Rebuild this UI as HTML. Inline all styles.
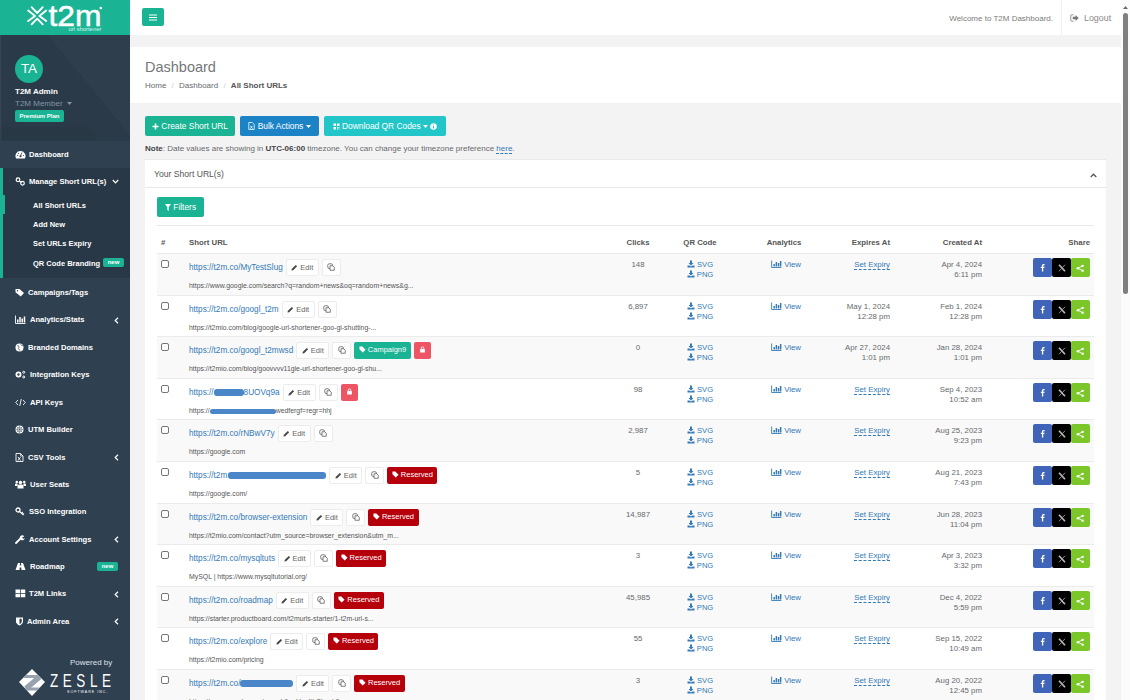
<!DOCTYPE html>
<html lang="en"><head><meta charset="utf-8"><title>T2M Dashboard - All Short URLs</title>
<style>
*{box-sizing:border-box}
html,body{margin:0;padding:0}
body{width:1130px;height:700px;overflow:hidden;position:relative;background:#f3f3f4;font-family:"Liberation Sans",sans-serif;color:#676a6c;font-size:8.3px;line-height:1.2}
.abs{position:absolute}
svg{display:inline-block;vertical-align:middle}
/* sidebar */
#side{position:absolute;left:0;top:0;width:130px;height:700px;background:#2f4050;overflow:hidden}
#logo{position:absolute;left:0;top:0;width:130px;height:35px;background:#1ab394}
#prof{position:absolute;left:0;top:35px;width:130px;height:106px;background:#2a3a48}
#av{position:absolute;left:15px;top:20px;width:28px;height:28px;border-radius:50%;background:#1ab394;color:#fff;font-size:13.5px;line-height:28px;text-align:center}
.mi{position:absolute;left:0;width:130px;height:27px;color:#fff;font-weight:bold;font-size:7.6px;line-height:27px;white-space:nowrap}
.mi .t{position:absolute;left:29px;top:0}
.mi svg{position:absolute;left:15px;top:9px}
.mi .ar{position:absolute;left:114px;top:10.500px}
.sub{position:absolute;left:33px;color:#fff;font-weight:bold;font-size:7.5px;line-height:10px;white-space:nowrap}
.new{position:absolute;background:#1ab394;color:#fff;font-size:6px;font-weight:bold;line-height:9px;height:9px;border-radius:2px;text-align:center;width:21px}
/* main */
#top{position:absolute;left:130px;top:0;width:991px;height:35px;background:#fff}
#hd{position:absolute;left:130px;top:47px;width:991px;height:56px;background:#fff}
.btn{position:absolute;height:20px;line-height:20px;border-radius:2px;color:#fff;font-size:8.400px;text-align:center;white-space:nowrap}
#ibox{position:absolute;left:145px;top:159px;width:961px;height:560px;background:#fff;border-top:1px solid #e7eaec}
.row{position:absolute;left:157px;width:937px;height:42px;border-top:1px solid #ebebeb;background:#fff}
.row.odd{background:#f9f9f9}
.cb{position:absolute;left:4px;top:6px;width:8px;height:8px;border:1px solid #767676;border-radius:2px;background:#fff}
.su{position:absolute;left:32px;top:3.700px;height:18px;white-space:nowrap;line-height:18px}
.lnk{color:#337ab7}
.sl{font-size:8.200px;vertical-align:middle;position:relative;top:.5px}
.lu{position:absolute;left:32px;top:26.500px;font-size:6.900px;color:#555;white-space:nowrap;line-height:9px}
.bt{display:inline-block;vertical-align:middle;height:17px;line-height:16px;border-radius:2px;font-size:7.500px;margin-left:3px;padding:0 4.500px;color:#fff}
.bt svg{vertical-align:-1px}
.bt.wh{background:#fff;border:1px solid #ececec;color:#666;line-height:15px}
.bt.cp{padding:0 4.500px}
.bt.camp{background:#1ab394}
.bt.lock{background:#ed5565;padding:0 5px}
.bt.res{background:#b5000c}
.rd{display:inline-block;height:7px;border-radius:3px;background:#4a86c8;vertical-align:-1px}
.rds{height:5px}
.c{position:absolute;top:5.800px;font-size:7.850px;line-height:10.600px;white-space:nowrap}
.clk{left:451px;width:60px;text-align:center}
.qr{left:513px;width:60px;text-align:center;font-size:7.600px}
.an{left:599px;width:60px;text-align:center}
.exp{right:204px;text-align:right}
.cr{right:112px;text-align:right}
.dash{border-bottom:1px dashed #337ab7}
.sh{position:absolute;right:4px;top:4px;height:19px;width:57px}
.s{position:absolute;top:0;width:19px;height:19px;text-align:center;line-height:18px;border-radius:2px}
.fb{left:0;background:#4065b8}
.tw{left:19px;background:#000}
.shr{left:38px;background:#7bc72a}
.th{position:absolute;top:237px;font-weight:bold;font-size:7.800px;color:#555;line-height:12px;white-space:nowrap}
.ic{vertical-align:-1px}
</style></head>
<body>
<div id="side">
<div id="logo">
<svg class="abs" style="left:0;top:0" width="130" height="35" viewBox="0 0 130 35">
<g stroke="#fff" stroke-width="1.900" fill="none" stroke-linecap="round" stroke-linejoin="round"><path d="M28.200 10.600L35 15.900 28.200 21.100M46.200 10.600L39.400 15.900 46.200 21.100M31.600 7.200L37.200 13 42.700 7.200M31.600 24.300L37.200 18.700 42.700 24.300"/></g>
<text x="48.500" y="26" font-family="Liberation Sans, sans-serif" font-size="29.500" fill="#fff" stroke="#fff" stroke-width=".5" textLength="53" lengthAdjust="spacingAndGlyphs">t2m</text>
<circle cx="100.800" cy="8" r="1.300" fill="#fff"/>
<text x="68.400" y="30.600" font-family="Liberation Sans, sans-serif" font-size="5" fill="#d8f3ec" textLength="33" lengthAdjust="spacingAndGlyphs">url shortener</text>
</svg>
</div>
<div id="prof"><svg class="abs" style="left:0;top:0" width="130" height="106" viewBox="0 0 130 106"><path d="M48 0h82v100z" fill="#fff" fill-opacity=".022"/><path d="M0 0h1.300v106H0z" fill="#fff" fill-opacity=".06"/><path d="M0 92h88l10 14H0z" fill="#000" fill-opacity=".03"/></svg>
<div id="av">TA</div>
<div class="abs" style="left:15px;top:51px;color:#fff;font-weight:bold;font-size:8px;line-height:11px">T2M Admin</div>
<div class="abs" style="left:15px;top:62.500px;color:#8095a8;font-size:8px;line-height:11px">T2M Member <svg width="5" height="3" viewBox="0 0 10 6" style="vertical-align:1px;margin-left:2px"><path d="M0 0h10L5 6z" fill="#8095a8"/></svg></div>
<div class="abs" style="left:15px;top:75px;width:49px;height:12px;background:#1ab394;border-radius:2px;color:#fff;font-weight:bold;font-size:6px;line-height:12px;text-align:center">Premium Plan</div>
</div>
<div class="abs" style="left:0;top:168px;width:130px;height:110px;background:#293846;border-left:3px solid #1ab394"></div>
<div class="abs" style="left:0;top:195px;width:5px;height:19px;background:#1ab394"></div>
<div class="mi" style="top:140.5px"><svg width="11" height="9" viewBox="0 0 22 18"><path d="M11 2a10 10 0 0 0-8.700 15h17.400A10 10 0 0 0 11 2z" fill="#fff"/><circle cx="11" cy="12.500" r="2.200" fill="#2f4050"/><path d="M11 12l3-7" stroke="#2f4050" stroke-width="1.600"/><circle cx="5" cy="11" r="1.200" fill="#2f4050"/><circle cx="7" cy="6.500" r="1.200" fill="#2f4050"/><circle cx="17" cy="11" r="1.200" fill="#2f4050"/></svg><span class="t" style="left:29px">Dashboard</span></div>
<div class="mi" style="top:167.5px"><svg width="11" height="9" viewBox="0 0 22 18"><circle cx="6" cy="5.500" r="3.600" fill="none" stroke="#fff" stroke-width="2.400"/><circle cx="15" cy="12.500" r="3.600" fill="none" stroke="#fff" stroke-width="2.400"/><path d="M8 7.500l5 3.500" stroke="#fff" stroke-width="2.400"/></svg><span class="t" style="left:29px">Manage Short URL(s)</span><svg class="ar" style="top:11.500px;left:112px" width="7" height="5" viewBox="0 0 7 5"><path d="M.8 1L3.500 3.800 6.200 1" fill="none" stroke="#fff" stroke-width="1.200"/></svg></div>
<div class="mi" style="top:278.5px"><svg width="11" height="9" viewBox="0 0 22 18"><path d="M1 2h8l9 8-6.500 7L1 8.500z" fill="#fff"/><circle cx="5" cy="5.500" r="1.500" fill="#2f4050"/></svg><span class="t" style="left:28px">Campaigns/Tags</span></div>
<div class="mi" style="top:306.0px"><svg width="11" height="9" viewBox="0 0 22 18"><path d="M1 1v16h20" fill="none" stroke="#fff" stroke-width="1.800"/><rect x="4" y="9" width="3" height="6" fill="#fff"/><rect x="8.500" y="4" width="3" height="11" fill="#fff"/><rect x="13" y="7" width="3" height="8" fill="#fff"/><rect x="17.500" y="3" width="3" height="12" fill="#fff"/></svg><span class="t" style="left:30px">Analytics/Stats</span><svg class="ar" width="5" height="7" viewBox="0 0 5 7"><path d="M4 .8L1.200 3.500 4 6.200" fill="none" stroke="#fff" stroke-width="1.200"/></svg></div>
<div class="mi" style="top:333.5px"><svg width="11" height="9" viewBox="0 0 22 18"><circle cx="9" cy="9" r="8" fill="#fff"/><path d="M4 6c2-1 4 0 4 2s-2 2-1 4 3 1 3 3" stroke="#2f4050" stroke-width="1.500" fill="none"/><path d="M11 3c1 2 4 1 5 3" stroke="#2f4050" stroke-width="1.500" fill="none"/></svg><span class="t" style="left:28px">Branded Domains</span></div>
<div class="mi" style="top:361.0px"><svg width="11" height="9" viewBox="0 0 22 18"><circle cx="7" cy="9" r="4.200" fill="none" stroke="#fff" stroke-width="3.600"/><circle cx="17.500" cy="4.500" r="2" fill="none" stroke="#fff" stroke-width="2"/><circle cx="17.500" cy="14" r="2" fill="none" stroke="#fff" stroke-width="2"/></svg><span class="t" style="left:30px">Integration Keys</span></div>
<div class="mi" style="top:388.5px"><svg width="11" height="9" viewBox="0 0 22 18"><path d="M6 4L1.500 9 6 14M16 4l4.500 5L16 14M12.500 2l-3 14" fill="none" stroke="#fff" stroke-width="1.800"/></svg><span class="t" style="left:30px">API Keys</span></div>
<div class="mi" style="top:416.0px"><svg width="11" height="9" viewBox="0 0 22 18"><circle cx="9" cy="9" r="8" fill="#fff"/><circle cx="9" cy="9" r="5" fill="none" stroke="#2f4050" stroke-width="1"/><path d="M9 1v16M1 9h16M3.500 3.500l11 11M14.500 3.500l-11 11" stroke="#2f4050" stroke-width=".8"/></svg><span class="t" style="left:28px">UTM Builder</span></div>
<div class="mi" style="top:443.5px"><svg width="11" height="9" viewBox="0 0 22 18"><path d="M2 1h9l5 5v11H2z" fill="none" stroke="#fff" stroke-width="1.800"/><path d="M11 1v5h5" fill="none" stroke="#fff" stroke-width="1.400"/><path d="M6 8l5 7M11 8l-5 7" stroke="#fff" stroke-width="1.800"/></svg><span class="t" style="left:28px">CSV Tools</span><svg class="ar" width="5" height="7" viewBox="0 0 5 7"><path d="M4 .8L1.200 3.500 4 6.200" fill="none" stroke="#fff" stroke-width="1.200"/></svg></div>
<div class="mi" style="top:471.0px"><svg width="11" height="9" viewBox="0 0 22 18"><circle cx="11" cy="5" r="3.500" fill="#fff"/><path d="M5 17v-5a3 3 0 0 1 3-3h6a3 3 0 0 1 3 3v5z" fill="#fff"/><circle cx="3.500" cy="4" r="2.500" fill="#fff"/><circle cx="18.500" cy="4" r="2.500" fill="#fff"/><path d="M0 12V9a2 2 0 0 1 2-2h3v5zM22 12V9a2 2 0 0 0-2-2h-3v5z" fill="#fff"/></svg><span class="t" style="left:30px">User Seats</span></div>
<div class="mi" style="top:498.0px"><svg width="11" height="9" viewBox="0 0 22 18"><circle cx="6" cy="6" r="4" fill="none" stroke="#fff" stroke-width="2.600"/><path d="M9 9l8 7M13 12.500l2.500-2.500M16 15l2-2" stroke="#fff" stroke-width="2.200" fill="none"/></svg><span class="t" style="left:29px">SSO Integration</span></div>
<div class="mi" style="top:525.5px"><svg width="11" height="9" viewBox="0 0 22 18"><path d="M2 16l9-9" stroke="#fff" stroke-width="3.600" stroke-linecap="round"/><path d="M18.500 2.500a5 5 0 1 0 1 4l-3.500 1-2-2z" fill="#fff"/></svg><span class="t" style="left:29px">Account Settings</span><svg class="ar" width="5" height="7" viewBox="0 0 5 7"><path d="M4 .8L1.200 3.500 4 6.200" fill="none" stroke="#fff" stroke-width="1.200"/></svg></div>
<div class="mi" style="top:552.5px"><svg width="11" height="9" viewBox="0 0 22 18"><path d="M6 2h4l-.5 5h3L12 2h4l5 14h-8l-.4-5h-3.200L9 16H1z" fill="#fff"/></svg><span class="t" style="left:30px">Roadmap</span><span class="new" style="left:97px;top:9px">new</span></div>
<div class="mi" style="top:580.0px"><svg width="11" height="9" viewBox="0 0 22 18"><rect x="1" y="1" width="9" height="7" fill="#fff"/><rect x="11.500" y="1" width="9" height="7" fill="#fff"/><rect x="1" y="9.500" width="9" height="7" fill="#fff"/><rect x="11.500" y="9.500" width="9" height="7" fill="#fff"/></svg><span class="t" style="left:29px">T2M Links</span><svg class="ar" width="5" height="7" viewBox="0 0 5 7"><path d="M4 .8L1.200 3.500 4 6.200" fill="none" stroke="#fff" stroke-width="1.200"/></svg></div>
<div class="mi" style="top:607.5px"><svg width="11" height="9" viewBox="0 0 22 18"><path d="M2 1h14v8c0 5-7 8-7 8s-7-3-7-8z" fill="#fff"/><path d="M9 3.500h4.500v5.500c0 3-4.500 5.500-4.500 5.500z" fill="#2f4050"/></svg><span class="t" style="left:27px">Admin Area</span><svg class="ar" width="5" height="7" viewBox="0 0 5 7"><path d="M4 .8L1.200 3.500 4 6.200" fill="none" stroke="#fff" stroke-width="1.200"/></svg></div>
<div class="sub" style="top:200.8px">All Short URLs</div>
<div class="sub" style="top:219.8px">Add New</div>
<div class="sub" style="top:238.8px">Set URLs Expiry</div>
<div class="sub" style="top:258.8px">QR Code Branding</div>
<span class="new" style="left:103px;top:258px">new</span>
<div class="abs" style="left:70px;top:657px;color:#dfe4ed;font-size:8px;line-height:11px">Powered by</div>
<svg class="abs" style="left:18px;top:668px" width="96" height="30" viewBox="0 0 96 30">
<clipPath id="dm"><path d="M14 1l13 13-13 14L1 14z"/></clipPath>
<path d="M14 1l13 13-13 14L1 14z" fill="#fff"/>
<g clip-path="url(#dm)" fill="none" stroke="#97a2ae"><path d="M5 8.500h17" stroke-width="3.200"/><path d="M21.500 9L8 20.500" stroke-width="5.500"/><path d="M7 21h17" stroke-width="3.200"/></g>
<text x="32" y="14.800" transform="scale(1,1.300)" font-family="Liberation Sans, sans-serif" font-size="13.500" fill="#fff" textLength="61" lengthAdjust="spacing">ZESLE</text>
<text x="49" y="25" font-family="Liberation Sans, sans-serif" font-size="3.600" fill="#fff" letter-spacing="1">SOFTWARE INC.</text>
</svg>
</div>
<div id="top">
<div class="abs" style="left:12px;top:8px;width:22px;height:18px;border-radius:2px;background:#1ab394"><svg class="abs" style="left:7px;top:5.500px" width="8" height="7" viewBox="0 0 8 7"><path d="M0 1h8M0 3.500h8M0 6h8" stroke="#fff" stroke-width="1.100"/></svg></div>
<div class="abs" style="right:68px;top:13px;font-size:8px;line-height:11px;color:#7c7c7c">Welcome to T2M Dashboard.</div>
<div class="abs" style="left:931px;top:0;width:1px;height:35px;background:#f0f0f0"></div>
<svg class="abs" style="left:940px;top:14px" width="9" height="8" viewBox="0 0 18 16"><path d="M7 1.500H3.500a2 2 0 0 0-2 2v9a2 2 0 0 0 2 2H7" fill="none" stroke="#888" stroke-width="1.800"/><path d="M5.500 5.500h5.500V2L17.500 8 11 14v-3.500H5.500z" fill="#777"/></svg>
<div class="abs" style="left:954px;top:12.500px;font-size:8.900px;line-height:11px;color:#888">Logout</div>
</div>
<div id="hd">
<div class="abs" style="left:15px;top:10px;font-size:14.500px;line-height:20px;color:#75787a">Dashboard</div>
<div class="abs" style="left:15px;top:33px;font-size:8px;line-height:11px;color:#676a6c;white-space:nowrap">Home <span style="color:#ccc;padding:0 3px">/</span> Dashboard <span style="color:#ccc;padding:0 3px">/</span> <b style="color:#555">All Short URLs</b></div>
</div>
<div class="btn" style="left:145px;top:116px;width:90px;background:#1ab394"><svg width="7" height="7" viewBox="0 0 14 14" style="vertical-align:-.5px"><path d="M7 1v12M1 7h12" stroke="#fff" stroke-width="3.200"/></svg> Create Short URL</div>
<div class="btn" style="left:240px;top:116px;width:79px;background:#1c84c6"><svg width="7" height="8" viewBox="0 0 14 16" style="vertical-align:-1px"><path d="M1.500 1h7l4 4v10h-11z" fill="none" stroke="#fff" stroke-width="1.500"/><path d="M4.500 7.500l4.500 6M9 7.500l-4.500 6" stroke="#fff" stroke-width="1.500"/></svg> Bulk Actions <svg width="5" height="3" viewBox="0 0 10 6" style="vertical-align:1px"><path d="M0 0h10L5 6z" fill="#fff"/></svg></div>
<div class="btn" style="left:324px;top:116px;width:122px;background:#23c6c8"><svg width="7" height="7" viewBox="0 0 14 14" style="vertical-align:-.5px"><path d="M1 1h5v5H1zM8 1h5v5H8zM1 8h5v5H1zM8 8h2v2H8zM11 8h2v2h-2zM8 11h2v2H8zM11 11h2v2h-2z" fill="#fff"/></svg> Download QR Codes <svg width="5" height="3" viewBox="0 0 10 6" style="vertical-align:1px"><path d="M0 0h10L5 6z" fill="#fff"/></svg> <svg width="7" height="7" viewBox="0 0 14 14" style="vertical-align:-.5px"><circle cx="7" cy="7" r="6.500" fill="#fff"/><path d="M7 6v5M7 3v1.600" stroke="#23c6c8" stroke-width="2"/></svg></div>
<div class="abs" style="left:145px;top:142.500px;font-size:8px;line-height:12px;white-space:nowrap"><b style="color:#444">Note</b>: Date values are showing in <b style="color:#444">UTC-06:00</b> timezone. You can change your timezone preference <span class="lnk dash">here</span>.</div>
<div id="ibox">
<div class="abs" style="left:9px;top:8px;font-size:8.600px;line-height:12px;color:#555">Your Short URL(s)</div>
<svg class="abs" style="left:945px;top:13px" width="7" height="5" viewBox="0 0 7 5"><path d="M.7 4L3.500 1.200 6.300 4" fill="none" stroke="#555" stroke-width="1.300"/></svg>
<div class="abs" style="left:0;top:27px;width:961px;height:1px;background:#e7eaec"></div>
</div>
<div class="btn" style="left:157px;top:197px;width:47px;background:#1ab394"><svg width="6" height="7" viewBox="0 0 12 14" style="vertical-align:-1px"><path d="M0 0h12L7.500 6v8l-3-2.500V6z" fill="#fff"/></svg> Filters</div>
<div class="abs" style="left:157px;top:225px;width:937px;height:1px;background:#e7eaec"></div>
<div class="th" style="left:161px">#</div>
<div class="th" style="left:189px">Short URL</div>
<div class="th" style="left:608px;width:60px;text-align:center">Clicks</div>
<div class="th" style="left:670px;width:60px;text-align:center">QR Code</div>
<div class="th" style="left:754px;width:60px;text-align:center">Analytics</div>
<div class="th" style="right:240px">Expires At</div>
<div class="th" style="right:148px">Created At</div>
<div class="th" style="right:40px">Share</div>
<div class="row odd" style="top:253px">
<i class="cb"></i>
<div class="su"><span class="lnk sl">https://t2m.co/MyTestSlug</span><span class="bt wh"><svg class="ic" viewBox="0 0 16 16" width="7" height="7"><path d="M1 15l1-4 9-9 3 3-9 9z" fill="#444"/></svg> Edit</span><span class="bt wh cp"><svg class="ic" viewBox="0 0 16 16" width="8" height="8"><rect x="1.500" y="1.500" width="9.500" height="9.500" rx="3" fill="none" stroke="#555" stroke-width="1.500"/><path d="M6 5.500h5.500l3 3v6H6z" fill="#fff" stroke="#555" stroke-width="1.500" stroke-linejoin="round"/></svg></span></div>
<div class="lu">https://www.google.com/search?q=random+news&amp;oq=random+news&amp;g...</div>
<div class="c clk">148</div>
<div class="c qr"><span class="lnk"><svg class="ic" viewBox="0 0 16 16" width="8" height="8"><path d="M6 1h4v5h3l-5 5-5-5h3z" fill="#337ab7"/><path d="M1 11h4l3 2 3-2h4v4H1z" fill="#337ab7"/></svg> SVG</span><br><span class="lnk"><svg class="ic" viewBox="0 0 16 16" width="8" height="8"><path d="M6 1h4v5h3l-5 5-5-5h3z" fill="#337ab7"/><path d="M1 11h4l3 2 3-2h4v4H1z" fill="#337ab7"/></svg> PNG</span></div>
<div class="c an"><span class="lnk"><svg class="ic" viewBox="0 0 18 16" width="11" height="8" preserveAspectRatio="none"><path d="M1 1v14h16" fill="none" stroke="#337ab7" stroke-width="1.6"/><rect x="4" y="8" width="2.4" height="5" fill="#337ab7"/><rect x="7.6" y="4" width="2.4" height="9" fill="#337ab7"/><rect x="11.2" y="6" width="2.4" height="7" fill="#337ab7"/><rect x="14.6" y="2" width="2.4" height="11" fill="#337ab7"/></svg> View</span></div>
<div class="c exp"><span class="lnk dash">Set Expiry</span></div>
<div class="c cr">Apr 4, 2024<br>6:11 pm</div>
<div class="sh"><span class="s fb"><svg viewBox="0 0 16 16" width="9" height="9"><path d="M9.3 15V8.9h2l.3-2.4H9.3V5c0-.7.2-1.100 1.200-1.100h1.200V1.700C11.500 1.700 10.800 1.600 10 1.600c-1.800 0-3 1.100-3 3.100v1.800H5v2.400h2V15z" fill="#fff"/></svg></span><span class="s tw"><svg viewBox="0 0 16 16" width="8" height="8"><path d="M2 1.500l12 13" stroke="#b8b8b8" stroke-width="3.400" fill="none"/><path d="M14 1.500L2 14.500" stroke="#a0a0a0" stroke-width="1.800" fill="none"/></svg></span><span class="s shr"><svg viewBox="0 0 16 16" width="8.500" height="8.500"><path d="M12.500 3.500L3.500 8l9 4.500" stroke="#fff" stroke-width="1.600" fill="none"/><circle cx="12.500" cy="3.500" r="2.300" fill="#fff"/><circle cx="3.500" cy="8" r="2.300" fill="#fff"/><circle cx="12.500" cy="12.500" r="2.300" fill="#fff"/></svg></span></div>
</div>
<div class="row" style="top:295px">
<i class="cb"></i>
<div class="su"><span class="lnk sl">https://t2m.co/googl_t2m</span><span class="bt wh"><svg class="ic" viewBox="0 0 16 16" width="7" height="7"><path d="M1 15l1-4 9-9 3 3-9 9z" fill="#444"/></svg> Edit</span><span class="bt wh cp"><svg class="ic" viewBox="0 0 16 16" width="8" height="8"><rect x="1.500" y="1.500" width="9.500" height="9.500" rx="3" fill="none" stroke="#555" stroke-width="1.500"/><path d="M6 5.500h5.500l3 3v6H6z" fill="#fff" stroke="#555" stroke-width="1.500" stroke-linejoin="round"/></svg></span></div>
<div class="lu">https://t2mio.com/blog/google-url-shortener-goo-gl-shutting-...</div>
<div class="c clk">6,897</div>
<div class="c qr"><span class="lnk"><svg class="ic" viewBox="0 0 16 16" width="8" height="8"><path d="M6 1h4v5h3l-5 5-5-5h3z" fill="#337ab7"/><path d="M1 11h4l3 2 3-2h4v4H1z" fill="#337ab7"/></svg> SVG</span><br><span class="lnk"><svg class="ic" viewBox="0 0 16 16" width="8" height="8"><path d="M6 1h4v5h3l-5 5-5-5h3z" fill="#337ab7"/><path d="M1 11h4l3 2 3-2h4v4H1z" fill="#337ab7"/></svg> PNG</span></div>
<div class="c an"><span class="lnk"><svg class="ic" viewBox="0 0 18 16" width="11" height="8" preserveAspectRatio="none"><path d="M1 1v14h16" fill="none" stroke="#337ab7" stroke-width="1.6"/><rect x="4" y="8" width="2.4" height="5" fill="#337ab7"/><rect x="7.6" y="4" width="2.4" height="9" fill="#337ab7"/><rect x="11.2" y="6" width="2.4" height="7" fill="#337ab7"/><rect x="14.6" y="2" width="2.4" height="11" fill="#337ab7"/></svg> View</span></div>
<div class="c exp">May 1, 2024<br>12:28 pm</div>
<div class="c cr">Feb 1, 2024<br>12:28 pm</div>
<div class="sh"><span class="s fb"><svg viewBox="0 0 16 16" width="9" height="9"><path d="M9.3 15V8.9h2l.3-2.4H9.3V5c0-.7.2-1.100 1.200-1.100h1.200V1.700C11.500 1.700 10.800 1.600 10 1.600c-1.800 0-3 1.100-3 3.100v1.800H5v2.400h2V15z" fill="#fff"/></svg></span><span class="s tw"><svg viewBox="0 0 16 16" width="8" height="8"><path d="M2 1.500l12 13" stroke="#b8b8b8" stroke-width="3.400" fill="none"/><path d="M14 1.500L2 14.500" stroke="#a0a0a0" stroke-width="1.800" fill="none"/></svg></span><span class="s shr"><svg viewBox="0 0 16 16" width="8.500" height="8.500"><path d="M12.500 3.500L3.500 8l9 4.500" stroke="#fff" stroke-width="1.600" fill="none"/><circle cx="12.500" cy="3.500" r="2.300" fill="#fff"/><circle cx="3.500" cy="8" r="2.300" fill="#fff"/><circle cx="12.500" cy="12.500" r="2.300" fill="#fff"/></svg></span></div>
</div>
<div class="row odd" style="top:336px">
<i class="cb"></i>
<div class="su"><span class="lnk sl">https://t2m.co/googl_t2mwsd</span><span class="bt wh"><svg class="ic" viewBox="0 0 16 16" width="7" height="7"><path d="M1 15l1-4 9-9 3 3-9 9z" fill="#444"/></svg> Edit</span><span class="bt wh cp"><svg class="ic" viewBox="0 0 16 16" width="8" height="8"><rect x="1.500" y="1.500" width="9.500" height="9.500" rx="3" fill="none" stroke="#555" stroke-width="1.500"/><path d="M6 5.500h5.500l3 3v6H6z" fill="#fff" stroke="#555" stroke-width="1.500" stroke-linejoin="round"/></svg></span><span class="bt camp"><svg class="ic" viewBox="0 0 16 16" width="7" height="7"><path d="M1 1h6.5l7.5 7.5-6.5 6.5L1 7.5z" fill="#fff"/></svg> Campaign9</span><span class="bt lock"><svg class="ic" viewBox="0 0 16 16" width="7" height="7"><rect x="2.5" y="7" width="11" height="8" rx="1" fill="#fff"/><path d="M5 7V5a3 3 0 0 1 6 0v2" fill="none" stroke="#fff" stroke-width="2"/></svg></span></div>
<div class="lu">https://t2mio.com/blog/goovvvv11gle-url-shortener-goo-gl-shu...</div>
<div class="c clk">0</div>
<div class="c qr"><span class="lnk"><svg class="ic" viewBox="0 0 16 16" width="8" height="8"><path d="M6 1h4v5h3l-5 5-5-5h3z" fill="#337ab7"/><path d="M1 11h4l3 2 3-2h4v4H1z" fill="#337ab7"/></svg> SVG</span><br><span class="lnk"><svg class="ic" viewBox="0 0 16 16" width="8" height="8"><path d="M6 1h4v5h3l-5 5-5-5h3z" fill="#337ab7"/><path d="M1 11h4l3 2 3-2h4v4H1z" fill="#337ab7"/></svg> PNG</span></div>
<div class="c an"><span class="lnk"><svg class="ic" viewBox="0 0 18 16" width="11" height="8" preserveAspectRatio="none"><path d="M1 1v14h16" fill="none" stroke="#337ab7" stroke-width="1.6"/><rect x="4" y="8" width="2.4" height="5" fill="#337ab7"/><rect x="7.6" y="4" width="2.4" height="9" fill="#337ab7"/><rect x="11.2" y="6" width="2.4" height="7" fill="#337ab7"/><rect x="14.6" y="2" width="2.4" height="11" fill="#337ab7"/></svg> View</span></div>
<div class="c exp">Apr 27, 2024<br>1:01 pm</div>
<div class="c cr">Jan 28, 2024<br>1:01 pm</div>
<div class="sh"><span class="s fb"><svg viewBox="0 0 16 16" width="9" height="9"><path d="M9.3 15V8.9h2l.3-2.4H9.3V5c0-.7.2-1.100 1.200-1.100h1.200V1.700C11.500 1.700 10.800 1.600 10 1.600c-1.800 0-3 1.100-3 3.100v1.800H5v2.400h2V15z" fill="#fff"/></svg></span><span class="s tw"><svg viewBox="0 0 16 16" width="8" height="8"><path d="M2 1.500l12 13" stroke="#b8b8b8" stroke-width="3.400" fill="none"/><path d="M14 1.500L2 14.500" stroke="#a0a0a0" stroke-width="1.800" fill="none"/></svg></span><span class="s shr"><svg viewBox="0 0 16 16" width="8.500" height="8.500"><path d="M12.500 3.500L3.500 8l9 4.500" stroke="#fff" stroke-width="1.600" fill="none"/><circle cx="12.500" cy="3.500" r="2.300" fill="#fff"/><circle cx="3.500" cy="8" r="2.300" fill="#fff"/><circle cx="12.500" cy="12.500" r="2.300" fill="#fff"/></svg></span></div>
</div>
<div class="row" style="top:378px">
<i class="cb"></i>
<div class="su"><span class="lnk sl">https://<i class="rd" style="width:30px"></i>8UOVq9a</span><span class="bt wh"><svg class="ic" viewBox="0 0 16 16" width="7" height="7"><path d="M1 15l1-4 9-9 3 3-9 9z" fill="#444"/></svg> Edit</span><span class="bt wh cp"><svg class="ic" viewBox="0 0 16 16" width="8" height="8"><rect x="1.500" y="1.500" width="9.500" height="9.500" rx="3" fill="none" stroke="#555" stroke-width="1.500"/><path d="M6 5.500h5.500l3 3v6H6z" fill="#fff" stroke="#555" stroke-width="1.500" stroke-linejoin="round"/></svg></span><span class="bt lock"><svg class="ic" viewBox="0 0 16 16" width="7" height="7"><rect x="2.5" y="7" width="11" height="8" rx="1" fill="#fff"/><path d="M5 7V5a3 3 0 0 1 6 0v2" fill="none" stroke="#fff" stroke-width="2"/></svg></span></div>
<div class="lu">https://<i class="rd rds" style="width:66px"></i>wedfergf=regr=hhj</div>
<div class="c clk">98</div>
<div class="c qr"><span class="lnk"><svg class="ic" viewBox="0 0 16 16" width="8" height="8"><path d="M6 1h4v5h3l-5 5-5-5h3z" fill="#337ab7"/><path d="M1 11h4l3 2 3-2h4v4H1z" fill="#337ab7"/></svg> SVG</span><br><span class="lnk"><svg class="ic" viewBox="0 0 16 16" width="8" height="8"><path d="M6 1h4v5h3l-5 5-5-5h3z" fill="#337ab7"/><path d="M1 11h4l3 2 3-2h4v4H1z" fill="#337ab7"/></svg> PNG</span></div>
<div class="c an"><span class="lnk"><svg class="ic" viewBox="0 0 18 16" width="11" height="8" preserveAspectRatio="none"><path d="M1 1v14h16" fill="none" stroke="#337ab7" stroke-width="1.6"/><rect x="4" y="8" width="2.4" height="5" fill="#337ab7"/><rect x="7.6" y="4" width="2.4" height="9" fill="#337ab7"/><rect x="11.2" y="6" width="2.4" height="7" fill="#337ab7"/><rect x="14.6" y="2" width="2.4" height="11" fill="#337ab7"/></svg> View</span></div>
<div class="c exp"><span class="lnk dash">Set Expiry</span></div>
<div class="c cr">Sep 4, 2023<br>10:52 am</div>
<div class="sh"><span class="s fb"><svg viewBox="0 0 16 16" width="9" height="9"><path d="M9.3 15V8.9h2l.3-2.4H9.3V5c0-.7.2-1.100 1.200-1.100h1.200V1.700C11.500 1.700 10.800 1.600 10 1.600c-1.800 0-3 1.100-3 3.100v1.800H5v2.400h2V15z" fill="#fff"/></svg></span><span class="s tw"><svg viewBox="0 0 16 16" width="8" height="8"><path d="M2 1.500l12 13" stroke="#b8b8b8" stroke-width="3.400" fill="none"/><path d="M14 1.500L2 14.500" stroke="#a0a0a0" stroke-width="1.800" fill="none"/></svg></span><span class="s shr"><svg viewBox="0 0 16 16" width="8.500" height="8.500"><path d="M12.500 3.500L3.500 8l9 4.500" stroke="#fff" stroke-width="1.600" fill="none"/><circle cx="12.500" cy="3.500" r="2.300" fill="#fff"/><circle cx="3.500" cy="8" r="2.300" fill="#fff"/><circle cx="12.500" cy="12.500" r="2.300" fill="#fff"/></svg></span></div>
</div>
<div class="row odd" style="top:419px">
<i class="cb"></i>
<div class="su"><span class="lnk sl">https://t2m.co/rNBwV7y</span><span class="bt wh"><svg class="ic" viewBox="0 0 16 16" width="7" height="7"><path d="M1 15l1-4 9-9 3 3-9 9z" fill="#444"/></svg> Edit</span><span class="bt wh cp"><svg class="ic" viewBox="0 0 16 16" width="8" height="8"><rect x="1.500" y="1.500" width="9.500" height="9.500" rx="3" fill="none" stroke="#555" stroke-width="1.500"/><path d="M6 5.500h5.500l3 3v6H6z" fill="#fff" stroke="#555" stroke-width="1.500" stroke-linejoin="round"/></svg></span></div>
<div class="lu">https://google.com</div>
<div class="c clk">2,987</div>
<div class="c qr"><span class="lnk"><svg class="ic" viewBox="0 0 16 16" width="8" height="8"><path d="M6 1h4v5h3l-5 5-5-5h3z" fill="#337ab7"/><path d="M1 11h4l3 2 3-2h4v4H1z" fill="#337ab7"/></svg> SVG</span><br><span class="lnk"><svg class="ic" viewBox="0 0 16 16" width="8" height="8"><path d="M6 1h4v5h3l-5 5-5-5h3z" fill="#337ab7"/><path d="M1 11h4l3 2 3-2h4v4H1z" fill="#337ab7"/></svg> PNG</span></div>
<div class="c an"><span class="lnk"><svg class="ic" viewBox="0 0 18 16" width="11" height="8" preserveAspectRatio="none"><path d="M1 1v14h16" fill="none" stroke="#337ab7" stroke-width="1.6"/><rect x="4" y="8" width="2.4" height="5" fill="#337ab7"/><rect x="7.6" y="4" width="2.4" height="9" fill="#337ab7"/><rect x="11.2" y="6" width="2.4" height="7" fill="#337ab7"/><rect x="14.6" y="2" width="2.4" height="11" fill="#337ab7"/></svg> View</span></div>
<div class="c exp"><span class="lnk dash">Set Expiry</span></div>
<div class="c cr">Aug 25, 2023<br>9:23 pm</div>
<div class="sh"><span class="s fb"><svg viewBox="0 0 16 16" width="9" height="9"><path d="M9.3 15V8.9h2l.3-2.4H9.3V5c0-.7.2-1.100 1.200-1.100h1.200V1.700C11.500 1.700 10.800 1.600 10 1.600c-1.800 0-3 1.100-3 3.100v1.800H5v2.400h2V15z" fill="#fff"/></svg></span><span class="s tw"><svg viewBox="0 0 16 16" width="8" height="8"><path d="M2 1.500l12 13" stroke="#b8b8b8" stroke-width="3.400" fill="none"/><path d="M14 1.500L2 14.500" stroke="#a0a0a0" stroke-width="1.800" fill="none"/></svg></span><span class="s shr"><svg viewBox="0 0 16 16" width="8.500" height="8.500"><path d="M12.500 3.500L3.500 8l9 4.500" stroke="#fff" stroke-width="1.600" fill="none"/><circle cx="12.500" cy="3.500" r="2.300" fill="#fff"/><circle cx="3.500" cy="8" r="2.300" fill="#fff"/><circle cx="12.500" cy="12.500" r="2.300" fill="#fff"/></svg></span></div>
</div>
<div class="row" style="top:461px">
<i class="cb"></i>
<div class="su"><span class="lnk sl">https://t2m<i class="rd" style="width:98px;margin-left:1px"></i></span><span class="bt wh"><svg class="ic" viewBox="0 0 16 16" width="7" height="7"><path d="M1 15l1-4 9-9 3 3-9 9z" fill="#444"/></svg> Edit</span><span class="bt wh cp"><svg class="ic" viewBox="0 0 16 16" width="8" height="8"><rect x="1.500" y="1.500" width="9.500" height="9.500" rx="3" fill="none" stroke="#555" stroke-width="1.500"/><path d="M6 5.500h5.500l3 3v6H6z" fill="#fff" stroke="#555" stroke-width="1.500" stroke-linejoin="round"/></svg></span><span class="bt res"><svg class="ic" viewBox="0 0 16 16" width="7" height="7"><path d="M1 1h6.5l7.5 7.5-6.5 6.5L1 7.5z" fill="#fff"/></svg> Reserved</span></div>
<div class="lu">https://google.com/</div>
<div class="c clk">5</div>
<div class="c qr"><span class="lnk"><svg class="ic" viewBox="0 0 16 16" width="8" height="8"><path d="M6 1h4v5h3l-5 5-5-5h3z" fill="#337ab7"/><path d="M1 11h4l3 2 3-2h4v4H1z" fill="#337ab7"/></svg> SVG</span><br><span class="lnk"><svg class="ic" viewBox="0 0 16 16" width="8" height="8"><path d="M6 1h4v5h3l-5 5-5-5h3z" fill="#337ab7"/><path d="M1 11h4l3 2 3-2h4v4H1z" fill="#337ab7"/></svg> PNG</span></div>
<div class="c an"><span class="lnk"><svg class="ic" viewBox="0 0 18 16" width="11" height="8" preserveAspectRatio="none"><path d="M1 1v14h16" fill="none" stroke="#337ab7" stroke-width="1.6"/><rect x="4" y="8" width="2.4" height="5" fill="#337ab7"/><rect x="7.6" y="4" width="2.4" height="9" fill="#337ab7"/><rect x="11.2" y="6" width="2.4" height="7" fill="#337ab7"/><rect x="14.6" y="2" width="2.4" height="11" fill="#337ab7"/></svg> View</span></div>
<div class="c exp"><span class="lnk dash">Set Expiry</span></div>
<div class="c cr">Aug 21, 2023<br>7:43 pm</div>
<div class="sh"><span class="s fb"><svg viewBox="0 0 16 16" width="9" height="9"><path d="M9.3 15V8.9h2l.3-2.4H9.3V5c0-.7.2-1.100 1.200-1.100h1.200V1.700C11.500 1.700 10.800 1.600 10 1.600c-1.800 0-3 1.100-3 3.100v1.800H5v2.400h2V15z" fill="#fff"/></svg></span><span class="s tw"><svg viewBox="0 0 16 16" width="8" height="8"><path d="M2 1.500l12 13" stroke="#b8b8b8" stroke-width="3.400" fill="none"/><path d="M14 1.500L2 14.500" stroke="#a0a0a0" stroke-width="1.800" fill="none"/></svg></span><span class="s shr"><svg viewBox="0 0 16 16" width="8.500" height="8.500"><path d="M12.500 3.500L3.500 8l9 4.500" stroke="#fff" stroke-width="1.600" fill="none"/><circle cx="12.500" cy="3.500" r="2.300" fill="#fff"/><circle cx="3.500" cy="8" r="2.300" fill="#fff"/><circle cx="12.500" cy="12.500" r="2.300" fill="#fff"/></svg></span></div>
</div>
<div class="row odd" style="top:503px">
<i class="cb"></i>
<div class="su"><span class="lnk sl">https://t2m.co/browser-extension</span><span class="bt wh"><svg class="ic" viewBox="0 0 16 16" width="7" height="7"><path d="M1 15l1-4 9-9 3 3-9 9z" fill="#444"/></svg> Edit</span><span class="bt wh cp"><svg class="ic" viewBox="0 0 16 16" width="8" height="8"><rect x="1.500" y="1.500" width="9.500" height="9.500" rx="3" fill="none" stroke="#555" stroke-width="1.500"/><path d="M6 5.500h5.500l3 3v6H6z" fill="#fff" stroke="#555" stroke-width="1.500" stroke-linejoin="round"/></svg></span><span class="bt res"><svg class="ic" viewBox="0 0 16 16" width="7" height="7"><path d="M1 1h6.5l7.5 7.5-6.5 6.5L1 7.5z" fill="#fff"/></svg> Reserved</span></div>
<div class="lu">https://t2mio.com/contact?utm_source=browser_extension&amp;utm_m...</div>
<div class="c clk">14,987</div>
<div class="c qr"><span class="lnk"><svg class="ic" viewBox="0 0 16 16" width="8" height="8"><path d="M6 1h4v5h3l-5 5-5-5h3z" fill="#337ab7"/><path d="M1 11h4l3 2 3-2h4v4H1z" fill="#337ab7"/></svg> SVG</span><br><span class="lnk"><svg class="ic" viewBox="0 0 16 16" width="8" height="8"><path d="M6 1h4v5h3l-5 5-5-5h3z" fill="#337ab7"/><path d="M1 11h4l3 2 3-2h4v4H1z" fill="#337ab7"/></svg> PNG</span></div>
<div class="c an"><span class="lnk"><svg class="ic" viewBox="0 0 18 16" width="11" height="8" preserveAspectRatio="none"><path d="M1 1v14h16" fill="none" stroke="#337ab7" stroke-width="1.6"/><rect x="4" y="8" width="2.4" height="5" fill="#337ab7"/><rect x="7.6" y="4" width="2.4" height="9" fill="#337ab7"/><rect x="11.2" y="6" width="2.4" height="7" fill="#337ab7"/><rect x="14.6" y="2" width="2.4" height="11" fill="#337ab7"/></svg> View</span></div>
<div class="c exp"><span class="lnk dash">Set Expiry</span></div>
<div class="c cr">Jun 28, 2023<br>11:04 pm</div>
<div class="sh"><span class="s fb"><svg viewBox="0 0 16 16" width="9" height="9"><path d="M9.3 15V8.9h2l.3-2.4H9.3V5c0-.7.2-1.100 1.200-1.100h1.200V1.700C11.500 1.700 10.800 1.600 10 1.600c-1.800 0-3 1.100-3 3.100v1.800H5v2.400h2V15z" fill="#fff"/></svg></span><span class="s tw"><svg viewBox="0 0 16 16" width="8" height="8"><path d="M2 1.500l12 13" stroke="#b8b8b8" stroke-width="3.400" fill="none"/><path d="M14 1.500L2 14.500" stroke="#a0a0a0" stroke-width="1.800" fill="none"/></svg></span><span class="s shr"><svg viewBox="0 0 16 16" width="8.500" height="8.500"><path d="M12.500 3.500L3.500 8l9 4.500" stroke="#fff" stroke-width="1.600" fill="none"/><circle cx="12.500" cy="3.500" r="2.300" fill="#fff"/><circle cx="3.500" cy="8" r="2.300" fill="#fff"/><circle cx="12.500" cy="12.500" r="2.300" fill="#fff"/></svg></span></div>
</div>
<div class="row" style="top:544px">
<i class="cb"></i>
<div class="su"><span class="lnk sl">https://t2m.co/mysqltuts</span><span class="bt wh"><svg class="ic" viewBox="0 0 16 16" width="7" height="7"><path d="M1 15l1-4 9-9 3 3-9 9z" fill="#444"/></svg> Edit</span><span class="bt wh cp"><svg class="ic" viewBox="0 0 16 16" width="8" height="8"><rect x="1.500" y="1.500" width="9.500" height="9.500" rx="3" fill="none" stroke="#555" stroke-width="1.500"/><path d="M6 5.500h5.500l3 3v6H6z" fill="#fff" stroke="#555" stroke-width="1.500" stroke-linejoin="round"/></svg></span><span class="bt res"><svg class="ic" viewBox="0 0 16 16" width="7" height="7"><path d="M1 1h6.5l7.5 7.5-6.5 6.5L1 7.5z" fill="#fff"/></svg> Reserved</span></div>
<div class="lu">MySQL | https://www.mysqltutorial.org/</div>
<div class="c clk">3</div>
<div class="c qr"><span class="lnk"><svg class="ic" viewBox="0 0 16 16" width="8" height="8"><path d="M6 1h4v5h3l-5 5-5-5h3z" fill="#337ab7"/><path d="M1 11h4l3 2 3-2h4v4H1z" fill="#337ab7"/></svg> SVG</span><br><span class="lnk"><svg class="ic" viewBox="0 0 16 16" width="8" height="8"><path d="M6 1h4v5h3l-5 5-5-5h3z" fill="#337ab7"/><path d="M1 11h4l3 2 3-2h4v4H1z" fill="#337ab7"/></svg> PNG</span></div>
<div class="c an"><span class="lnk"><svg class="ic" viewBox="0 0 18 16" width="11" height="8" preserveAspectRatio="none"><path d="M1 1v14h16" fill="none" stroke="#337ab7" stroke-width="1.6"/><rect x="4" y="8" width="2.4" height="5" fill="#337ab7"/><rect x="7.6" y="4" width="2.4" height="9" fill="#337ab7"/><rect x="11.2" y="6" width="2.4" height="7" fill="#337ab7"/><rect x="14.6" y="2" width="2.4" height="11" fill="#337ab7"/></svg> View</span></div>
<div class="c exp"><span class="lnk dash">Set Expiry</span></div>
<div class="c cr">Apr 3, 2023<br>3:32 pm</div>
<div class="sh"><span class="s fb"><svg viewBox="0 0 16 16" width="9" height="9"><path d="M9.3 15V8.9h2l.3-2.4H9.3V5c0-.7.2-1.100 1.200-1.100h1.200V1.700C11.500 1.700 10.800 1.600 10 1.600c-1.800 0-3 1.100-3 3.100v1.800H5v2.400h2V15z" fill="#fff"/></svg></span><span class="s tw"><svg viewBox="0 0 16 16" width="8" height="8"><path d="M2 1.500l12 13" stroke="#b8b8b8" stroke-width="3.400" fill="none"/><path d="M14 1.500L2 14.500" stroke="#a0a0a0" stroke-width="1.800" fill="none"/></svg></span><span class="s shr"><svg viewBox="0 0 16 16" width="8.500" height="8.500"><path d="M12.500 3.500L3.500 8l9 4.500" stroke="#fff" stroke-width="1.600" fill="none"/><circle cx="12.500" cy="3.500" r="2.300" fill="#fff"/><circle cx="3.500" cy="8" r="2.300" fill="#fff"/><circle cx="12.500" cy="12.500" r="2.300" fill="#fff"/></svg></span></div>
</div>
<div class="row odd" style="top:586px">
<i class="cb"></i>
<div class="su"><span class="lnk sl">https://t2m.co/roadmap</span><span class="bt wh"><svg class="ic" viewBox="0 0 16 16" width="7" height="7"><path d="M1 15l1-4 9-9 3 3-9 9z" fill="#444"/></svg> Edit</span><span class="bt wh cp"><svg class="ic" viewBox="0 0 16 16" width="8" height="8"><rect x="1.500" y="1.500" width="9.500" height="9.500" rx="3" fill="none" stroke="#555" stroke-width="1.500"/><path d="M6 5.500h5.500l3 3v6H6z" fill="#fff" stroke="#555" stroke-width="1.500" stroke-linejoin="round"/></svg></span><span class="bt res"><svg class="ic" viewBox="0 0 16 16" width="7" height="7"><path d="M1 1h6.5l7.5 7.5-6.5 6.5L1 7.5z" fill="#fff"/></svg> Reserved</span></div>
<div class="lu">https://starter.productboard.com/t2murls-starter/1-t2m-url-s...</div>
<div class="c clk">45,985</div>
<div class="c qr"><span class="lnk"><svg class="ic" viewBox="0 0 16 16" width="8" height="8"><path d="M6 1h4v5h3l-5 5-5-5h3z" fill="#337ab7"/><path d="M1 11h4l3 2 3-2h4v4H1z" fill="#337ab7"/></svg> SVG</span><br><span class="lnk"><svg class="ic" viewBox="0 0 16 16" width="8" height="8"><path d="M6 1h4v5h3l-5 5-5-5h3z" fill="#337ab7"/><path d="M1 11h4l3 2 3-2h4v4H1z" fill="#337ab7"/></svg> PNG</span></div>
<div class="c an"><span class="lnk"><svg class="ic" viewBox="0 0 18 16" width="11" height="8" preserveAspectRatio="none"><path d="M1 1v14h16" fill="none" stroke="#337ab7" stroke-width="1.6"/><rect x="4" y="8" width="2.4" height="5" fill="#337ab7"/><rect x="7.6" y="4" width="2.4" height="9" fill="#337ab7"/><rect x="11.2" y="6" width="2.4" height="7" fill="#337ab7"/><rect x="14.6" y="2" width="2.4" height="11" fill="#337ab7"/></svg> View</span></div>
<div class="c exp"><span class="lnk dash">Set Expiry</span></div>
<div class="c cr">Dec 4, 2022<br>5:59 pm</div>
<div class="sh"><span class="s fb"><svg viewBox="0 0 16 16" width="9" height="9"><path d="M9.3 15V8.9h2l.3-2.4H9.3V5c0-.7.2-1.100 1.200-1.100h1.200V1.700C11.500 1.700 10.800 1.600 10 1.600c-1.800 0-3 1.100-3 3.100v1.800H5v2.400h2V15z" fill="#fff"/></svg></span><span class="s tw"><svg viewBox="0 0 16 16" width="8" height="8"><path d="M2 1.500l12 13" stroke="#b8b8b8" stroke-width="3.400" fill="none"/><path d="M14 1.500L2 14.500" stroke="#a0a0a0" stroke-width="1.800" fill="none"/></svg></span><span class="s shr"><svg viewBox="0 0 16 16" width="8.500" height="8.500"><path d="M12.500 3.500L3.500 8l9 4.500" stroke="#fff" stroke-width="1.600" fill="none"/><circle cx="12.500" cy="3.500" r="2.300" fill="#fff"/><circle cx="3.500" cy="8" r="2.300" fill="#fff"/><circle cx="12.500" cy="12.500" r="2.300" fill="#fff"/></svg></span></div>
</div>
<div class="row" style="top:627px">
<i class="cb"></i>
<div class="su"><span class="lnk sl">https://t2m.co/explore</span><span class="bt wh"><svg class="ic" viewBox="0 0 16 16" width="7" height="7"><path d="M1 15l1-4 9-9 3 3-9 9z" fill="#444"/></svg> Edit</span><span class="bt wh cp"><svg class="ic" viewBox="0 0 16 16" width="8" height="8"><rect x="1.500" y="1.500" width="9.500" height="9.500" rx="3" fill="none" stroke="#555" stroke-width="1.500"/><path d="M6 5.500h5.500l3 3v6H6z" fill="#fff" stroke="#555" stroke-width="1.500" stroke-linejoin="round"/></svg></span><span class="bt res"><svg class="ic" viewBox="0 0 16 16" width="7" height="7"><path d="M1 1h6.5l7.5 7.5-6.5 6.5L1 7.5z" fill="#fff"/></svg> Reserved</span></div>
<div class="lu">https://t2mio.com/pricing</div>
<div class="c clk">55</div>
<div class="c qr"><span class="lnk"><svg class="ic" viewBox="0 0 16 16" width="8" height="8"><path d="M6 1h4v5h3l-5 5-5-5h3z" fill="#337ab7"/><path d="M1 11h4l3 2 3-2h4v4H1z" fill="#337ab7"/></svg> SVG</span><br><span class="lnk"><svg class="ic" viewBox="0 0 16 16" width="8" height="8"><path d="M6 1h4v5h3l-5 5-5-5h3z" fill="#337ab7"/><path d="M1 11h4l3 2 3-2h4v4H1z" fill="#337ab7"/></svg> PNG</span></div>
<div class="c an"><span class="lnk"><svg class="ic" viewBox="0 0 18 16" width="11" height="8" preserveAspectRatio="none"><path d="M1 1v14h16" fill="none" stroke="#337ab7" stroke-width="1.6"/><rect x="4" y="8" width="2.4" height="5" fill="#337ab7"/><rect x="7.6" y="4" width="2.4" height="9" fill="#337ab7"/><rect x="11.2" y="6" width="2.4" height="7" fill="#337ab7"/><rect x="14.6" y="2" width="2.4" height="11" fill="#337ab7"/></svg> View</span></div>
<div class="c exp"><span class="lnk dash">Set Expiry</span></div>
<div class="c cr">Sep 15, 2022<br>10:49 am</div>
<div class="sh"><span class="s fb"><svg viewBox="0 0 16 16" width="9" height="9"><path d="M9.3 15V8.9h2l.3-2.4H9.3V5c0-.7.2-1.100 1.200-1.100h1.200V1.700C11.500 1.700 10.800 1.600 10 1.600c-1.800 0-3 1.100-3 3.100v1.800H5v2.400h2V15z" fill="#fff"/></svg></span><span class="s tw"><svg viewBox="0 0 16 16" width="8" height="8"><path d="M2 1.500l12 13" stroke="#b8b8b8" stroke-width="3.400" fill="none"/><path d="M14 1.500L2 14.500" stroke="#a0a0a0" stroke-width="1.800" fill="none"/></svg></span><span class="s shr"><svg viewBox="0 0 16 16" width="8.500" height="8.500"><path d="M12.500 3.500L3.500 8l9 4.500" stroke="#fff" stroke-width="1.600" fill="none"/><circle cx="12.500" cy="3.500" r="2.300" fill="#fff"/><circle cx="3.500" cy="8" r="2.300" fill="#fff"/><circle cx="12.500" cy="12.500" r="2.300" fill="#fff"/></svg></span></div>
</div>
<div class="row odd" style="top:669px">
<i class="cb"></i>
<div class="su"><span class="lnk sl">https://t2m.co/<i class="rd" style="width:53px"></i></span><span class="bt wh"><svg class="ic" viewBox="0 0 16 16" width="7" height="7"><path d="M1 15l1-4 9-9 3 3-9 9z" fill="#444"/></svg> Edit</span><span class="bt wh cp"><svg class="ic" viewBox="0 0 16 16" width="8" height="8"><rect x="1.500" y="1.500" width="9.500" height="9.500" rx="3" fill="none" stroke="#555" stroke-width="1.500"/><path d="M6 5.500h5.500l3 3v6H6z" fill="#fff" stroke="#555" stroke-width="1.500" stroke-linejoin="round"/></svg></span><span class="bt res"><svg class="ic" viewBox="0 0 16 16" width="7" height="7"><path d="M1 1h6.5l7.5 7.5-6.5 6.5L1 7.5z" fill="#fff"/></svg> Reserved</span></div>
<div class="lu">https://www.google.com/search?q=HealthCheck?</div>
<div class="c clk">3</div>
<div class="c qr"><span class="lnk"><svg class="ic" viewBox="0 0 16 16" width="8" height="8"><path d="M6 1h4v5h3l-5 5-5-5h3z" fill="#337ab7"/><path d="M1 11h4l3 2 3-2h4v4H1z" fill="#337ab7"/></svg> SVG</span><br><span class="lnk"><svg class="ic" viewBox="0 0 16 16" width="8" height="8"><path d="M6 1h4v5h3l-5 5-5-5h3z" fill="#337ab7"/><path d="M1 11h4l3 2 3-2h4v4H1z" fill="#337ab7"/></svg> PNG</span></div>
<div class="c an"><span class="lnk"><svg class="ic" viewBox="0 0 18 16" width="11" height="8" preserveAspectRatio="none"><path d="M1 1v14h16" fill="none" stroke="#337ab7" stroke-width="1.6"/><rect x="4" y="8" width="2.4" height="5" fill="#337ab7"/><rect x="7.6" y="4" width="2.4" height="9" fill="#337ab7"/><rect x="11.2" y="6" width="2.4" height="7" fill="#337ab7"/><rect x="14.6" y="2" width="2.4" height="11" fill="#337ab7"/></svg> View</span></div>
<div class="c exp"><span class="lnk dash">Set Expiry</span></div>
<div class="c cr">Aug 20, 2022<br>12:45 pm</div>
<div class="sh"><span class="s fb"><svg viewBox="0 0 16 16" width="9" height="9"><path d="M9.3 15V8.9h2l.3-2.4H9.3V5c0-.7.2-1.100 1.200-1.100h1.200V1.700C11.500 1.700 10.800 1.600 10 1.600c-1.800 0-3 1.100-3 3.100v1.800H5v2.400h2V15z" fill="#fff"/></svg></span><span class="s tw"><svg viewBox="0 0 16 16" width="8" height="8"><path d="M2 1.500l12 13" stroke="#b8b8b8" stroke-width="3.400" fill="none"/><path d="M14 1.500L2 14.500" stroke="#a0a0a0" stroke-width="1.800" fill="none"/></svg></span><span class="s shr"><svg viewBox="0 0 16 16" width="8.500" height="8.500"><path d="M12.500 3.500L3.500 8l9 4.500" stroke="#fff" stroke-width="1.600" fill="none"/><circle cx="12.500" cy="3.500" r="2.300" fill="#fff"/><circle cx="3.500" cy="8" r="2.300" fill="#fff"/><circle cx="12.500" cy="12.500" r="2.300" fill="#fff"/></svg></span></div>
</div>
<div class="abs" style="left:1121px;top:0;width:9px;height:700px;background:#fbfbfb"></div>
<div class="abs" style="left:1123px;top:13px;width:5px;height:281px;border-radius:3px;background:#7f7f7f"></div>
<svg class="abs" style="left:1123px;top:6px" width="5" height="3" viewBox="0 0 5 3"><path d="M0 3L2.500 0 5 3z" fill="#6a6a6a"/></svg>

</body></html>
